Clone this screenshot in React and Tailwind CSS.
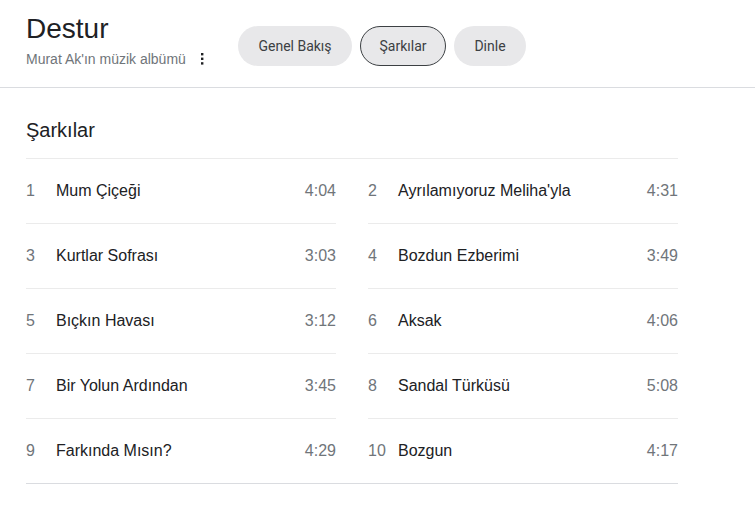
import React from 'react';

const songs = [
  { n: 1, title: 'Mum Çiçeği', time: '4:04' },
  { n: 2, title: "Ayrılamıyoruz Meliha'yla", time: '4:31' },
  { n: 3, title: 'Kurtlar Sofrası', time: '3:03' },
  { n: 4, title: 'Bozdun Ezberimi', time: '3:49' },
  { n: 5, title: 'Bıçkın Havası', time: '3:12' },
  { n: 6, title: 'Aksak', time: '4:06' },
  { n: 7, title: 'Bir Yolun Ardından', time: '3:45' },
  { n: 8, title: 'Sandal Türküsü', time: '5:08' },
  { n: 9, title: 'Farkında Mısın?', time: '4:29' },
  { n: 10, title: 'Bozgun', time: '4:17' },
];

function MoreIcon() {
  return (
    <svg width="4" height="12" viewBox="0 0 4 12" className="text-[#202124]">
      <rect x="1" y="0" width="2.4" height="2.4" fill="currentColor" />
      <rect x="1" y="4.6" width="2.4" height="2.4" fill="currentColor" />
      <rect x="1" y="9.2" width="2.4" height="2.4" fill="currentColor" />
    </svg>
  );
}

export default function App() {
  const tabs = [
    { label: 'Genel Bakış', w: 'w-[114px]', active: false },
    { label: 'Şarkılar', w: 'w-[86px]', active: true },
    { label: 'Dinle', w: 'w-[72px]', active: false },
  ];

  return (
    <div className="min-h-screen bg-white font-['Liberation_Sans',Arial,sans-serif]">
      {/* header */}
      <header className="h-[88px] border-b border-[#dadce0] flex items-start px-[26px]">
        <div className="w-[212px] pt-[12px]">
          <h1 className="text-[28px] leading-[34px] text-[#202124]">Destur</h1>
          <div className="mt-[3px] flex items-center text-[14px] leading-[20px] text-[#70757a]">
            <span>Murat Ak'ın müzik albümü</span>
            <span className="ml-[14px] flex items-center"><MoreIcon /></span>
          </div>
        </div>
        <nav className="mt-[26px] flex gap-[8px]">
          {tabs.map((t) => (
            <button
              key={t.label}
              className={`${t.w} h-[40px] rounded-full bg-[#e8e8ea] text-[14px] text-[#3c4043] flex items-center justify-center font-['Roboto','Liberation_Sans',sans-serif] ${
                t.active ? 'border border-[#3c4043]' : ''
              }`}
            >
              {t.label}
            </button>
          ))}
        </nav>
      </header>

      {/* songs */}
      <section className="px-[26px]">
        <h2 className="mt-[28px] text-[20px] leading-[28px] text-[#202124]">Şarkılar</h2>
        <div className="mt-[14px] w-[652px] border-t border-b border-t-[#ebebeb] border-b-[#dadce0] grid grid-cols-2 gap-x-[32px]">
          {songs.map((s, i) => (
            <div
              key={s.n}
              className={`flex items-center text-[16px] ${i < 8 ? 'h-[65px] border-b border-[#ebebeb]' : 'h-[64px]'}`}
            >
              <span className="w-[30px] text-[#70757a]">{s.n}</span>
              <span className="flex-1 text-[#202124]">{s.title}</span>
              <span className="text-[#70757a]">{s.time}</span>
            </div>
          ))}
        </div>
      </section>
    </div>
  );
}
